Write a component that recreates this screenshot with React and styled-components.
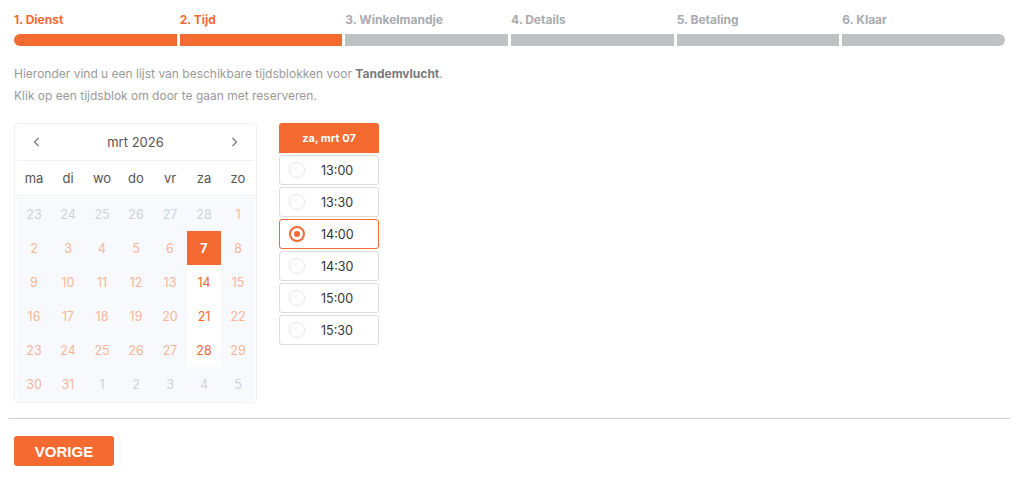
import React from "react";
import styled, { createGlobalStyle } from "styled-components";

const ORANGE = "#f46a31";

const Global = createGlobalStyle`
  html, body { margin: 0; padding: 0; background: #fff; }
  body { font-family: Inter, "Noto Sans", sans-serif; }
  * { box-sizing: border-box; }
`;

const Page = styled.div`
  width: 1024px;
  padding: 8px 9px 0;
`;

const Inner = styled.div`
  padding: 0 5px;
`;

const Steps = styled.div`
  display: grid;
  grid-template-columns: repeat(6, 1fr);
  column-gap: 3px;
  padding-right: 5px;
`;

const Step = styled.div`
  display: flex;
  flex-direction: column;
`;

const StepLabel = styled.div`
  font-size: 12px;
  font-weight: 700;
  line-height: 22px;
  height: 26px;
  padding-top: 1px;
  color: ${(p) => (p.$active ? ORANGE : "#a9abae")};
`;

const StepBar = styled.div`
  height: 12px;
  background: ${(p) => (p.$active ? ORANGE : "#bfc2c5")};
  border-radius: ${(p) => (p.$first ? "6px 0 0 6px" : p.$last ? "0 6px 6px 0" : "0")};
`;

const Intro = styled.p`
  margin: 17px 0 16px;
  font-size: 12px;
  line-height: 22px;
  color: #9a9a9a;
  b { color: #7a7a7a; font-weight: 700; }
`;

const Row = styled.div`
  display: flex;
  align-items: flex-start;
  gap: 22px;
`;

const Calendar = styled.div`
  width: 243px;
  border: 1px solid #eef0f3;
  border-radius: 4px;
  padding: 0 2px 1px;
`;

const CalHead = styled.div`
  height: 37px;
  display: flex;
  align-items: center;
  justify-content: space-between;
  padding: 0 14px;
  border-bottom: 1px solid #f0f1f4;
  font-size: 13px;
  color: #555;
`;

const Arrow = styled.span`
  display: flex;
  color: #777;
`;

const Grid = styled.div`
  display: grid;
  grid-template-columns: repeat(7, 34px);
`;

const WeekDay = styled.div`
  height: 35px;
  display: flex;
  align-items: center;
  justify-content: center;
  font-size: 13px;
  color: #555;
  border-bottom: 1px solid #f0f1f4;
`;

const DayGrid = styled(Grid)`
  background: #f7f9fc;
  margin-top: 1px;
`;

const Day = styled.div`
  height: 34px;
  display: flex;
  align-items: center;
  justify-content: center;
  font-size: 12.5px;
  color: ${(p) =>
    p.$kind === "other" ? "#cdd2db" : p.$kind === "sel" ? "#fff" : p.$kind === "avail" ? ORANGE : "#f9b597"};
  background: ${(p) => (p.$kind === "sel" ? ORANGE : p.$kind === "avail" ? "#fff" : "transparent")};
  font-weight: ${(p) => (p.$kind === "sel" ? 700 : 400)};
`;

const Slots = styled.div`
  width: 100px;
  display: flex;
  flex-direction: column;
  gap: 2px;
`;

const SlotHead = styled.div`
  height: 30px;
  background: ${ORANGE};
  color: #fff;
  font-size: 11px;
  font-weight: 700;
  display: flex;
  align-items: center;
  justify-content: center;
  border-radius: 3px 3px 0 0;
`;

const Slot = styled.div`
  height: 30px;
  border: 1px solid ${(p) => (p.$sel ? ORANGE : "#dcdcdc")};
  border-radius: 3px;
  display: flex;
  align-items: center;
  padding-left: 9px;
  font-size: 12.5px;
  color: #333;
`;

const Radio = styled.span`
  width: 16px;
  height: 16px;
  border-radius: 50%;
  border: ${(p) => (p.$sel ? `2px solid ${ORANGE}` : "1px solid #e6e6e6")};
  display: flex;
  align-items: center;
  justify-content: center;
  margin-right: 16px;
  &::after {
    content: "";
    width: 6px;
    height: 6px;
    border-radius: 50%;
    background: ${(p) => (p.$sel ? ORANGE : "transparent")};
  }
`;

const Divider = styled.hr`
  margin: 15px 0 17px;
  border: 0;
  border-top: 1px solid #cfcfcf;
  width: 1001px;
`;

const Button = styled.button`
  margin-left: 5px;
  width: 100px;
  height: 30px;
  border: 0;
  border-radius: 3px;
  background: ${ORANGE};
  color: #fff;
  font-family: "Liberation Sans", Arial, sans-serif;
  font-weight: 700;
  font-size: 15px;
`;

const steps = ["1. Dienst", "2. Tijd", "3. Winkelmandje", "4. Details", "5. Betaling", "6. Klaar"];
const weekdays = ["ma", "di", "wo", "do", "vr", "za", "zo"];

const days = [];
[23, 24, 25, 26, 27, 28].forEach((d) => days.push({ d, kind: "other" }));
for (let d = 1; d <= 31; d++) {
  let kind = "dis";
  if (d === 7) kind = "sel";
  else if (d === 14 || d === 21 || d === 28) kind = "avail";
  days.push({ d, kind });
}
[1, 2, 3, 4, 5].forEach((d) => days.push({ d, kind: "other" }));

const times = ["13:00", "13:30", "14:00", "14:30", "15:00", "15:30"];

const Chevron = ({ dir }) => (
  <svg width="12" height="12" viewBox="0 0 12 12" fill="none" stroke="currentColor" strokeWidth="1.2">
    {dir === "left" ? <path d="M7.5 2 L3.5 6 L7.5 10" /> : <path d="M4.5 2 L8.5 6 L4.5 10" />}
  </svg>
);

export default function App() {
  return (
    <Page>
      <Global />
      <Inner>
        <Steps>
          {steps.map((s, i) => (
            <Step key={s}>
              <StepLabel $active={i < 2}>{s}</StepLabel>
              <StepBar $active={i < 2} $first={i === 0} $last={i === steps.length - 1} />
            </Step>
          ))}
        </Steps>
        <Intro>
          Hieronder vind u een lijst van beschikbare tijdsblokken voor <b>Tandemvlucht</b>.
          <br />
          Klik op een tijdsblok om door te gaan met reserveren.
        </Intro>
        <Row>
          <Calendar>
            <CalHead>
              <Arrow><Chevron dir="left" /></Arrow>
              <span>mrt 2026</span>
              <Arrow><Chevron dir="right" /></Arrow>
            </CalHead>
            <Grid>
              {weekdays.map((w) => (
                <WeekDay key={w}>{w}</WeekDay>
              ))}
            </Grid>
            <DayGrid>
              {days.map((x, i) => (
                <Day key={i} $kind={x.kind}>{x.d}</Day>
              ))}
            </DayGrid>
          </Calendar>
          <Slots>
            <SlotHead>za, mrt 07</SlotHead>
            {times.map((t) => (
              <Slot key={t} $sel={t === "14:00"}>
                <Radio $sel={t === "14:00"} />
                {t}
              </Slot>
            ))}
          </Slots>
        </Row>
      </Inner>
      <Divider />
      <Button>VORIGE</Button>
    </Page>
  );
}
